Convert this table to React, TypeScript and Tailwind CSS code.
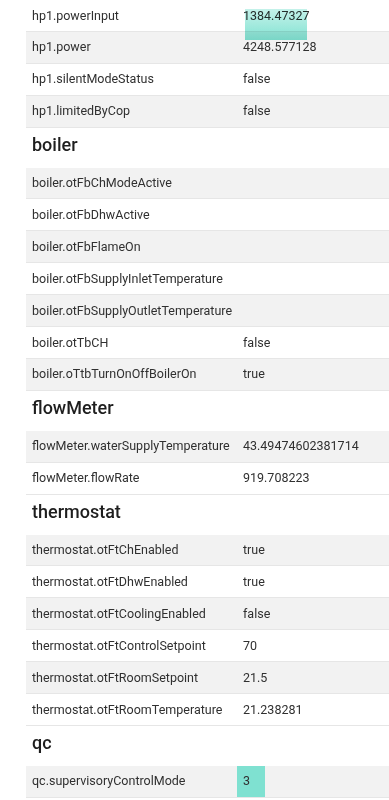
import React from "react";

type Row = [string, string];
type Section = { title?: string; rows: Row[]; startIndex: number };

const sections: Section[] = [
  {
    rows: [
      ["hp1.powerInput", "1384.47327"],
      ["hp1.power", "4248.577128"],
      ["hp1.silentModeStatus", "false"],
      ["hp1.limitedByCop", "false"],
    ],
    startIndex: 1,
  },
  {
    title: "boiler",
    rows: [
      ["boiler.otFbChModeActive", ""],
      ["boiler.otFbDhwActive", ""],
      ["boiler.otFbFlameOn", ""],
      ["boiler.otFbSupplyInletTemperature", ""],
      ["boiler.otFbSupplyOutletTemperature", ""],
      ["boiler.otTbCH", "false"],
      ["boiler.oTtbTurnOnOffBoilerOn", "true"],
    ],
    startIndex: 0,
  },
  {
    title: "flowMeter",
    rows: [
      ["flowMeter.waterSupplyTemperature", "43.49474602381714"],
      ["flowMeter.flowRate", "919.708223"],
    ],
    startIndex: 0,
  },
  {
    title: "thermostat",
    rows: [
      ["thermostat.otFtChEnabled", "true"],
      ["thermostat.otFtDhwEnabled", "true"],
      ["thermostat.otFtCoolingEnabled", "false"],
      ["thermostat.otFtControlSetpoint", "70"],
      ["thermostat.otFtRoomSetpoint", "21.5"],
      ["thermostat.otFtRoomTemperature", "21.238281"],
    ],
    startIndex: 0,
  },
  {
    title: "qc",
    rows: [["qc.supervisoryControlMode", "3"]],
    startIndex: 0,
  },
];

export default function App() {
  return (
    <div
      className="relative w-[389px] h-[800px] overflow-hidden bg-white text-[#303030]"
      style={{ fontFamily: "Roboto, 'Liberation Sans', sans-serif" }}
    >
      <div className="pl-[26px]">
        {sections.map((s, si) => (
          <div key={si}>
            {s.title && (
              <div className="h-[40px] flex items-center pl-[6px] pb-[6px] text-[18px] font-medium text-[#1e1e1e]">
                {s.title}
              </div>
            )}
            {s.rows.map(([k, v], ri) => {
              const gray = (ri + s.startIndex) % 2 === 0;
              const isQc = k === "qc.supervisoryControlMode";
              return (
                <div
                  key={k}
                  className={`relative h-[31.9px] flex items-center pt-[1px] text-[12.5px] border-b border-[#e6e6e6] ${
                    gray ? "bg-[#f2f2f2]" : "bg-white"
                  }`}
                >
                  <div className="w-[211px] pl-[6px] whitespace-nowrap">{k}</div>
                  {isQc ? (
                    <div className="self-stretch -mt-[1px] w-[28px] bg-[#7fe1d1] flex items-center pl-[6px] pt-[1px]">{v}</div>
                  ) : (
                    <div className="pl-[6px] whitespace-nowrap">{v}</div>
                  )}
                </div>
              );
            })}
          </div>
        ))}
      </div>
      <div className="absolute left-[245px] top-[9px] w-[62px] h-[31px] bg-gradient-to-b from-[#c4f2ea] to-[#80e2d2] mix-blend-multiply" />
    </div>
  );
}
